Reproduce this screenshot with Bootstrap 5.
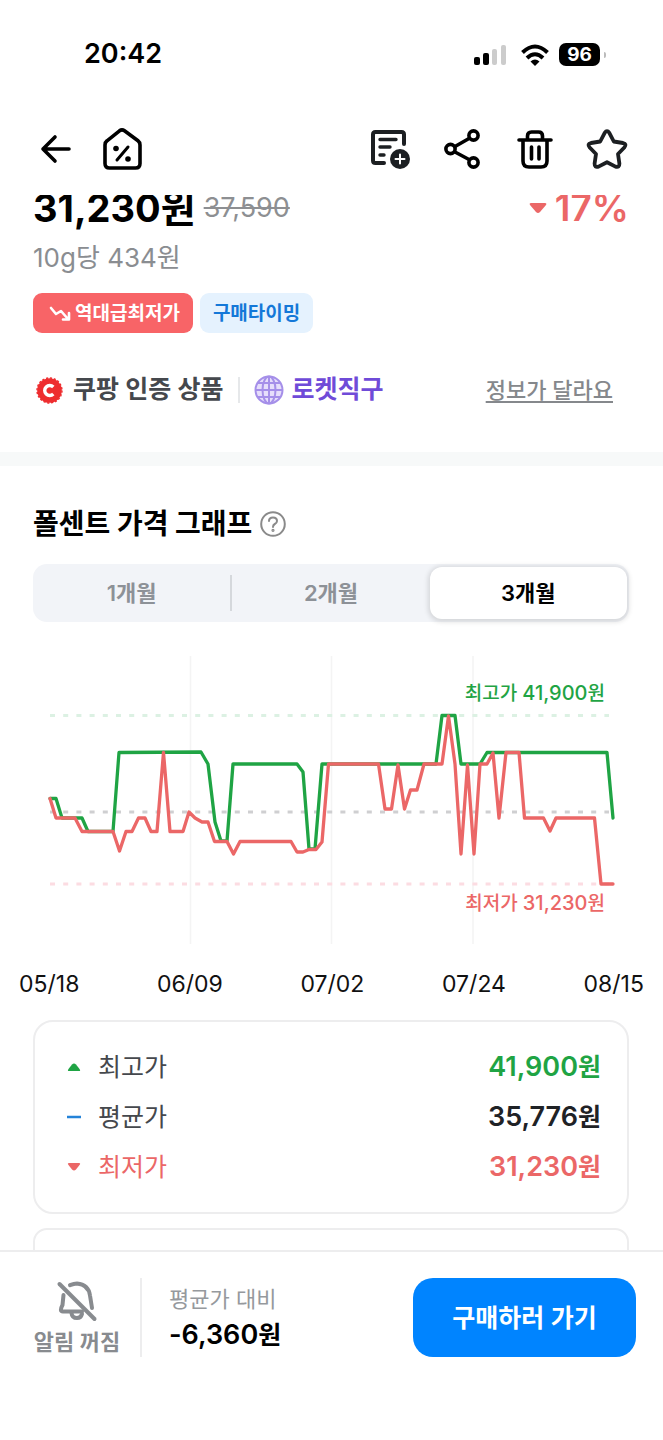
<!DOCTYPE html>
<html lang="ko">
<head>
<meta charset="utf-8">
<meta name="viewport" content="width=device-width, initial-scale=1">
<title>폴센트 가격 그래프</title>
<link href="https://cdn.jsdelivr.net/npm/bootstrap@5.3.0/dist/css/bootstrap.min.css" rel="stylesheet">
<style>
  :root { --up:#1fa444; --down:#eb6767; --muted:#8a8d91; --line:#ededee; }
  body { font-family:Inter,"Noto Sans CJK KR",sans-serif; color:#000; background:#fff; }
  svg { display:block; flex:none; }
  .icon-btn { border:0; background:none; padding:0; color:#101214; }
  .status { height:108px; padding:1px 57px 0 84px; font-size:27px; font-weight:600; }
  .battery { width:41px; height:23px; border-radius:7px; background:#000; color:#fff; font-size:19px; font-weight:700; line-height:23px; }
  .battery-tip { width:2px; height:6px; background:#bbb; border-radius:0 2px 2px 0; }
  .topbar { height:87px; padding:0 35px 6px 40px; }
  .gutter { padding-left:33px; padding-right:34px; }
  .price-row { height:26px; line-height:26px; }
  .price { font-size:38px; font-weight:700; }
  .was { font-size:27px; color:#8d8f92; }
  .rate { font-size:37px; font-weight:600; color:var(--down); }
  .unit { margin-top:17px; line-height:40px; font-size:26px; color:var(--muted); }
  .tags { margin-top:15px; gap:7px; }
  .tag { height:40px; border-radius:9px; font-size:19px; font-weight:600; padding:2px 13px 0; }
  .tag-low { background:#f86467; color:#fff; padding-left:16px; }
  .tag-time { background:#e5f2fe; color:#1478d8; }
  .cert { margin-top:36px; margin-bottom:43px; height:40px; padding-top:2px; font-size:25px; font-weight:600; color:#45484d; }
  .cert .rule { width:2px; height:26px; background:#e6e8ea; margin:0 14px; }
  .rocket { color:#6f4bd8; }
  .wrong { font-size:22px; font-weight:500; color:#85888c; margin-right:16px; text-underline-offset:3px; }
  .band { height:14px; background:#f7f9f9; }
  .graph-title { margin:38px 0 20px; font-size:28px; font-weight:700; line-height:40px; }
  .seg { height:58px; border-radius:14px; background:#f2f4f8; }
  .seg label { font-size:22px; font-weight:600; color:#8d9197; cursor:pointer; }
  .seg .seg-rule { width:2px; height:36px; background:#d5d8dc; }
  .seg .btn-check:checked + label { background:#fff; color:#000; border-radius:12px; margin:3px 2px 3px 0; box-shadow:0 1px 5px 2px rgba(0,0,0,.12); }
  .chart { margin-top:28px; width:100%; height:auto; }
  .axis { margin:14px 19px 16px; font-size:23px; line-height:40px; color:#111; }
  .panel { border:2px solid var(--line); border-radius:20px; }
  .stats { padding:20px 26px 20px 31px; }
  .stats dt, .stats dd { margin:0; line-height:49px; }
  .stats dt { font-size:25px; font-weight:400; color:#45484d; }
  .stats dd { font-size:27px; font-weight:600; }
  .stats .won, .saving .won { font-size:25px; }
  .up { color:var(--up) !important; }
  .down { color:var(--down) !important; }
  .next-panel { margin-top:14px; height:120px; border-radius:14px; }
  .buybar { border-top:2px solid var(--line); padding:26px 27px 83px 34px; }
  .alarm { color:#888b8f; font-size:22px; font-weight:600; line-height:30px; width:86px; }
  .buybar .rule { width:2px; height:79px; background:var(--line); margin:0 27px 0 20px; }
  .compare { font-size:22px; line-height:35px; color:#96999d; }
  .saving { font-size:27px; font-weight:600; line-height:35px; }
  .buy { width:223px; height:79px; border-radius:20px; border:0; background:#0084ff; color:#fff; font-size:25px; font-weight:600; padding-top:8px; }
  .buy:hover { background:#0078e8; color:#fff; }
</style>
</head>
<body>
<div class="vh-100 d-flex flex-column overflow-hidden">
  <div class="status d-flex align-items-center justify-content-between flex-shrink-0">
    <span>20:42</span>
    <div class="d-flex align-items-center">
      <svg width="33" height="22" viewBox="0 0 33 22"><rect x="0" y="13" width="6" height="8" rx="2"/><rect x="9" y="9" width="6" height="12" rx="2"/><g fill="#ccc"><rect x="18" y="5" width="5" height="16" rx="2"/><rect x="27" y="1" width="5" height="20" rx="2"/></g></svg>
      <svg class="ms-2 me-2 ps-1" width="36" height="22" viewBox="-2 0 32 22"><g fill="none" stroke="#000" stroke-width="4"><path d="M1.500 8.500Q14-3.500 26.500 8.500"/><path d="M6 14Q14 6.500 22 14"/></g><path d="M9.500 17.500Q14 13.500 18.500 17.500L14 22Z"/></svg>
      <span class="battery text-center">96</span><span class="battery-tip ms-1"></span>
    </div>
  </div>

  <header class="topbar d-flex align-items-center justify-content-between flex-shrink-0">
    <div class="d-flex align-items-center gap-4">
      <button class="icon-btn" type="button" aria-label="뒤로"><svg width="32" height="42" viewBox="0 0 32 42" fill="none" stroke="#000" stroke-width="3.600" stroke-linecap="round" stroke-linejoin="round"><path d="M3 21H29M15 9L3 21L15 33"/></svg></button>
      <button class="icon-btn ms-1" type="button" aria-label="홈"><svg width="43" height="44" viewBox="-1 0 43 44" fill="none" stroke="#000" stroke-width="3.600" stroke-linecap="round" stroke-linejoin="round"><path d="M18.500 3.800Q21 2 23.500 3.800L37 13.800Q39 15.300 39 18V36.500Q39 41 34.500 41H8.500Q4 41 4 36.500V18Q4 15.300 6 13.800Z"/><path d="M27 20L16 33" stroke-width="3"/><circle cx="15" cy="21.500" r="2.800" fill="#000" stroke="none"/><circle cx="27" cy="32" r="2.800" fill="#000" stroke="none"/></svg></button>
    </div>
    <div class="d-flex align-items-center gap-4">
      <button class="icon-btn" type="button" aria-label="메모 추가"><svg width="42" height="42" viewBox="0 0 42 42" fill="none" stroke="#1c1f22" stroke-width="4" stroke-linecap="round" stroke-linejoin="round"><path d="M35 16V6.500Q35 4 32.500 4H6.500Q4 4 4 6.500V32.500Q4 35 6.500 35H15"/><path d="M11 11.500H27M11 19H21M11 27H15" stroke-width="3.400"/><circle cx="31" cy="31" r="10" fill="#1c1f22" stroke="none"/><path d="M26.500 31H35.500M31 26.500V35.500" stroke="#fff" stroke-width="2"/></svg></button>
      <button class="icon-btn ms-2" type="button" aria-label="공유"><svg width="42" height="42" viewBox="0 0 42 42" fill="none" stroke="#000" stroke-width="3.600"><path d="M12 18.500L26 10.500M12 24L26 31.500"/><circle cx="7.500" cy="21" r="4.600"/><circle cx="30.500" cy="7.500" r="4.600"/><circle cx="30.500" cy="34.500" r="4.600"/></svg></button>
      <button class="icon-btn ms-2" type="button" aria-label="삭제"><svg width="37" height="42" viewBox="0 0 37 42" fill="none" stroke="#000" stroke-width="3.600" stroke-linecap="round" stroke-linejoin="round"><path d="M2 12H34M6 12V33Q6 39 12 39H24Q30 39 30 33V12M10.500 11V8Q10.500 4 14.500 4H21.500Q25.500 4 25.500 8V11M14.500 19V31M22 19V31"/></svg></button>
      <button class="icon-btn ms-2" type="button" aria-label="즐겨찾기"><svg width="42" height="42" viewBox="0 0 42 42" fill="none" stroke="#1c1f22" stroke-width="3.800" stroke-linejoin="round"><path d="M18.700 4.800Q21 1.500 23.300 4.800L27.800 13.500L37 15Q41.200 16 38.300 19.500L32 26L33.400 35.500Q33.500 40 29.500 38.600L21 34.200L12.500 38.600Q8.500 40 8.600 35.500L10 26L3.700 19.500Q.8 16 5 15L14.200 13.500Z"/></svg></button>
    </div>
  </header>

  <main class="flex-fill overflow-hidden" style="min-height:0">
    <section class="gutter">
      <div class="price-row d-flex align-items-center justify-content-between">
        <div class="d-flex align-items-center gap-2"><span class="price">31,230원</span><del class="was">37,590</del></div>
        <div class="rate d-flex align-items-center gap-2"><svg width="18" height="12" viewBox="0 0 18 12" fill="currentColor"><path d="M2 1H16Q18 1 17 3L11 10Q9 12 7 10L1 3Q0 1 2 1Z"/></svg>17%</div>
      </div>
      <div class="unit">10g당 434원</div>
      <div class="tags d-flex">
        <span class="tag tag-low d-flex align-items-center gap-1"><svg width="22" height="16" viewBox="0 0 22 16" fill="none" stroke="#fff" stroke-width="2.600" stroke-linecap="round" stroke-linejoin="round"><path d="M2 2L7 8L12 5L19 13M20 7V13.500H14"/></svg>역대급최저가</span>
        <span class="tag tag-time d-flex align-items-center">구매타이밍</span>
      </div>
      <div class="cert d-flex align-items-center">
        <svg class="me-2" width="32" height="27" viewBox="-3 0 32 27"><circle cx="13.500" cy="13.500" r="12.300" fill="#ee2d2f"/><circle cx="13.500" cy="13.500" r="12.500" fill="none" stroke="#ee2d2f" stroke-width="1.400" stroke-dasharray="2.200 1.727"/><path d="M17.300 10A5 5 0 1 0 17.300 17" fill="none" stroke="#fff" stroke-width="3.400"/></svg>
        <span>쿠팡 인증 상품</span><span class="rule"></span>
        <svg class="me-2" width="30" height="30" viewBox="0 0 30 30" fill="#e6defb" stroke="#a58fe9" stroke-width="2"><circle cx="15" cy="15" r="13.500"/><g fill="none"><ellipse cx="15" cy="15" rx="6.500" ry="13.500"/><path d="M15 1.500V28.500M1.500 15H28.500M4 8H26M4 22H26"/></g></svg>
        <span class="rocket">로켓직구</span>
        <a href="#" class="wrong ms-auto">정보가 달라요</a>
      </div>
    </section>
    <div class="band"></div>

    <section class="gutter">
      <h1 class="graph-title d-flex align-items-center gap-2">폴센트 가격 그래프
        <button class="icon-btn" type="button" aria-label="도움말"><svg width="26" height="26" viewBox="0 0 26 26" fill="none" stroke="#8a8a8a" stroke-width="2" stroke-linecap="round"><circle cx="13" cy="13" r="11.800"/><path d="M9 10Q9 6.500 13 6.500T17 10Q17 11.800 14.800 13Q13 14 13 16"/><circle cx="13" cy="19.300" r=".6"/></svg></button></h1>
      <div class="seg d-flex align-items-stretch" role="group" aria-label="기간">
        <input class="btn-check" type="radio" name="period" id="m1"><label for="m1" class="flex-fill w-100 d-flex align-items-center justify-content-center">1개월</label>
        <span class="seg-rule align-self-center flex-shrink-0"></span>
        <input class="btn-check" type="radio" name="period" id="m2"><label for="m2" class="flex-fill w-100 d-flex align-items-center justify-content-center">2개월</label>
        <input class="btn-check" type="radio" name="period" id="m3" checked><label for="m3" class="flex-fill w-100 d-flex align-items-center justify-content-center">3개월</label>
      </div>
    </section>

    <svg class="chart" viewBox="0 0 663 300" fill="none" role="img" aria-label="3개월 가격 추이">
      <path d="M190.500 6V294M331.500 6V294M473 6V294" stroke="#f4f4f4" stroke-width="1.500"/>
      <g stroke-width="3" stroke-dasharray="5 8.200"><path d="M50 65.500H609" stroke="#dcf1e3"/><path d="M50 162H609" stroke="#cfcfd1"/><path d="M50 234H609" stroke="#fcdce2"/></g>
      <g stroke-width="3.300" stroke-linecap="round" stroke-linejoin="round">
        <polyline stroke="#1fa444" points="50,148.500 56,148.500 62,168 82,168 88,181.500 113,181.500 119,102.500 201,102 208,114 215,172 221,191 227,191 233,114 297,114 303,122 309,199 315,199 322,114 436,114 442,65.500 455,65.500 461,114 480,114 487,102.500 607,102.500 613,168"/>
        <polyline stroke="#eb6767" points="50,148.500 56,168 75,168 82,181.500 113,181.500 119.500,201 126,181.500 132,181.500 138.500,168 145,168 151,181.500 157,181.500 163.500,102.500 170,181.500 183,181.500 189,162 195,168 202,172 208,172 214.500,191.500 227,191.500 233.500,204 240,191.500 291,191.500 297,202 303,202 309,199.500 316,199.500 322,192 328.500,114 378.500,114 385,159 391.500,159 398,115 404.500,159 410.500,140 417,140 424,114 442,114 448.500,66 455,114 461,204 467.500,115 474,204 480,114 487,114 493,103 499,168 506,102.500 519,102.500 524.500,168 543.500,168 550,181 556,168 594.500,168 601,234 613,234"/>
      </g>
      <g font-size="19" font-weight="500" text-anchor="end"><text x="605" y="50" fill="#1fa444">최고가 <tspan font-size="20">41,900</tspan>원</text><text x="605" y="260" fill="#eb6767">최저가 <tspan font-size="20">31,230</tspan>원</text></g>
    </svg>
    <div class="axis d-flex justify-content-between"><span>05/18</span><span>06/09</span><span>07/02</span><span>07/24</span><span>08/15</span></div>

    <section class="gutter">
      <dl class="panel stats mb-0">
        <div class="d-flex justify-content-between"><dt class="d-flex align-items-center gap-3"><svg width="16" height="10" viewBox="0 0 16 10" fill="#1fa444"><path d="M3 9H13Q15 9 13.500 7L10 2.500Q8 .5 6 2.500L2.500 7Q1 9 3 9Z"/></svg>최고가</dt><dd class="up">41,900<span class="won">원</span></dd></div>
        <div class="d-flex justify-content-between"><dt class="d-flex align-items-center gap-3"><svg width="16" height="10" viewBox="0 0 16 10"><path d="M1 5H15" stroke="#2483d8" stroke-width="2.500"/></svg>평균가</dt><dd style="color:#1f2226">35,776<span class="won">원</span></dd></div>
        <div class="d-flex justify-content-between"><dt class="down d-flex align-items-center gap-3"><svg width="16" height="10" viewBox="0 0 16 10" fill="#eb6767"><path d="M3 1H13Q15 1 13.500 3L10 7.500Q8 9.500 6 7.500L2.500 3Q1 1 3 1Z"/></svg>최저가</dt><dd class="down">31,230<span class="won">원</span></dd></div>
      </dl>
      <div class="panel next-panel"></div>
    </section>
  </main>

  <footer class="buybar d-flex align-items-center flex-shrink-0 bg-white">
    <button class="icon-btn alarm d-flex flex-column align-items-center text-nowrap" type="button">
      <svg width="44" height="48" viewBox="0 0 44 48" fill="none" stroke="currentColor" stroke-width="4" stroke-linecap="round" stroke-linejoin="round"><path d="M4.500 5L39.500 40"/><path d="M15 6.200Q19 4.500 22 4.500Q33.500 5.500 35 16.500L37 29"/><path d="M8.500 16L7.500 26Q4 32.500 8 32.500H27"/><path d="M16.500 34Q17 39 22 39Q26 39 27 35"/></svg>
      <span>알림 꺼짐</span></button>
    <span class="rule"></span>
    <div><div class="compare">평균가 대비</div><div class="saving">-6,360<span class="won">원</span></div></div>
    <button class="btn buy ms-auto" type="button">구매하러 가기</button>
  </footer>
</div>
<script src="https://cdn.jsdelivr.net/npm/bootstrap@5.3.0/dist/js/bootstrap.bundle.min.js"></script>
</body>
</html>
